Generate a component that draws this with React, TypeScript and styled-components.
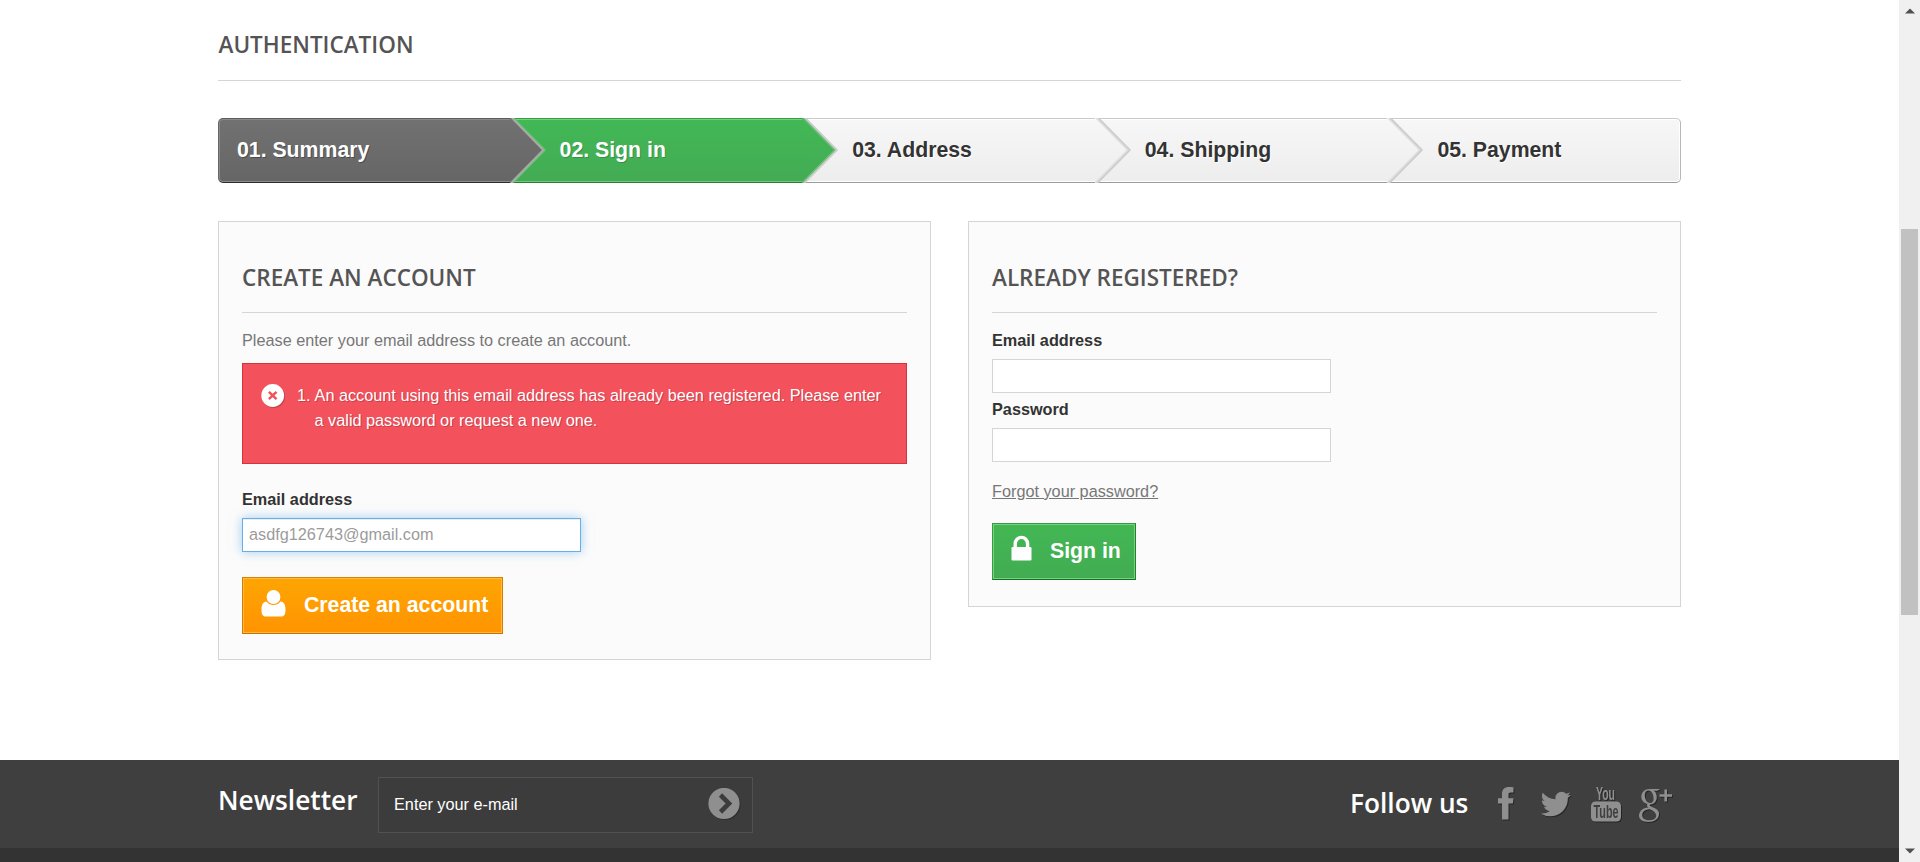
import React from "react";
import styled, { createGlobalStyle, css } from "styled-components";

const GlobalStyle = createGlobalStyle`
  *, *::before, *::after { box-sizing: border-box; }
  html, body { margin: 0; padding: 0; height: 862px; overflow: hidden; background: #fff; }
  body { font: 16.25px/22.5px "Liberation Sans", Arial, sans-serif; color: #777; }
  h1, h3, h4, p, ol { margin: 0; padding: 0; font-weight: inherit; }
  button, input { font: inherit; }
`;

const Viewport = styled.div`
  display: flex;
  height: 862px;
  overflow: hidden;
`;

const Page = styled.div`
  flex: 1;
  display: flex;
  flex-direction: column;
`;

const Main = styled.main`
  width: 1463px;
  height: 760px;
  flex: none;
  margin-left: 218px;
`;

const headingText = css`
  font: 600 22.5px/28px "Open Sans", sans-serif;
  color: #555454;
  text-transform: uppercase;
  border-bottom: 1px solid #d6d4d4;
  white-space: nowrap;
`;

const PageHeading = styled.h1`
  ${headingText}
  height: 81px;
  padding-top: 31px;
  text-indent: 0.5px;
  margin-bottom: 37px;
`;

const Steps = styled.ol`
  display: flex;
  height: 65px;
  margin-bottom: 38px;
  list-style: none;
`;

type StepKind = "done" | "current" | "todo";

const stepLook = {
  done: css`
    background: linear-gradient(#727171, #666);
    border-color: #5e5d5d #666 #2e2d2d;
    color: #fff;
    text-shadow: 1px 1px rgba(0, 0, 0, 0.3);
    box-shadow: inset 0 0 0 1px #8b8a8a;
  `,
  current: css`
    background: linear-gradient(#42b856, #43ab54);
    border-color: #399b49 #399b49 #247f32;
    color: #fff;
    text-shadow: 1px 1px rgba(0, 0, 0, 0.2);
    box-shadow: inset 0 1px #74d578, inset 0 -1px #74c77d;
  `,
  todo: css`
    background: linear-gradient(#f7f7f7, #ededed);
    border-color: #cacaca #b7b7b7 #9a9a9a;
    color: #333;
    text-shadow: 1px 1px #fff;
    box-shadow: inset 0 1px #fff, inset 0 -1px #fff;
  `,
};

const Step = styled.li<{ $kind: StepKind; $first?: boolean; $last?: boolean }>`
  position: relative;
  flex: none;
  width: 20%;
  height: 65px;
  padding-left: ${(p) => (p.$first ? 18 : 49)}px;
  border-style: solid;
  border-width: 1px 0;
  font-size: 21.25px;
  line-height: 63px;
  font-weight: bold;
  white-space: nowrap;
  ${(p) => stepLook[p.$kind]}
  ${(p) => p.$first && "border-left-width: 1px; border-radius: 5px 0 0 5px;"}
  ${(p) => p.$last && "border-right-width: 1px; border-radius: 0 5px 5px 0; box-shadow: inset 0 0 0 1px #fff;"}
`;

const ArrowSvg = styled.svg`
  position: absolute;
  z-index: 2;
  left: 100%;
  top: -1px;
  margin-left: -1px;
`;

const arrowFill: Record<StepKind, [string, string, string, string]> = {
  done: ["#727171", "#666", "#7d7b7c", "#6bc276"],
  current: ["#42b856", "#43ab54", "#62be6e", "#cbcbcb"],
  todo: ["#f7f7f7", "#ededed", "#e2e2e2", "#cdcdcd"],
};

const Arrow = ({ kind, id }: { kind: StepKind; id: string }) => {
  const [top, bottom, inner, outer] = arrowFill[kind];
  return (
    <ArrowSvg width="38" height="65" viewBox="0 0 38 65">
      <defs>
        <linearGradient id={id} x1="0" y1="0" x2="0" y2="1">
          <stop offset="0" stopColor={top} />
          <stop offset="1" stopColor={bottom} />
        </linearGradient>
      </defs>
      <path d="M0 0H2.5L34 32 2 65H0Z" fill={`url(#${id})`} />
      <path d="M2.5 0L34 32 1.5 65" fill="none" stroke={outer} strokeWidth="3" />
      <path d="M1 0L32.5 32 0 65" fill="none" stroke={inner} strokeWidth="1.4" />
      {kind === "done" && <path d="M2 0L33.2 32 1 65" fill="none" stroke="#b0abae" strokeWidth="1.6" />}
    </ArrowSvg>
  );
};

const Columns = styled.div`
  display: flex;
  align-items: flex-start;
  gap: 37px;
`;

const Panel = styled.section<{ $height: number }>`
  width: 713px;
  height: ${(p) => p.$height}px;
  padding: 0 23px;
  background: #fbfbfb;
  border: 1px solid #d6d4d4;
`;

const PanelHeading = styled.h3`
  ${headingText}
  height: 91px;
  padding-top: 42px;
  margin-bottom: 16px;
`;

const Alert = styled.div`
  display: flex;
  height: 101px;
  margin: 11.5px 0 24px;
  padding: 20px 18px;
  background: #f3515c;
  border: 1px solid #d4323d;
  color: #fff;
  line-height: 25px;
  text-shadow: 1px 1px rgba(0, 0, 0, 0.2);
`;

const AlertIcon = styled.svg`
  flex: none;
  margin-right: 12px;
  filter: drop-shadow(1px 1px 0 rgba(0, 0, 0, 0.2));
`;

const AlertList = styled.div`
  display: flex;
  gap: 4px;
  margin-top: -1px;
  white-space: nowrap;
`;

const Label = styled.label`
  display: block;
  height: 23px;
  margin-bottom: 7px;
  color: #333;
  font-weight: bold;
`;

const Input = styled.input<{ $active?: boolean; $gap: number }>`
  display: block;
  width: 339px;
  height: 34px;
  margin: 0 0 ${(p) => p.$gap}px;
  padding: 0 6px 2px;
  border: 1px solid #d6d4d4;
  border-radius: 0;
  outline: none;
  background: #fff;
  color: #9c9b9b;
  ${(p) =>
    p.$active &&
    "border-color: #66afe9; box-shadow: inset 0 1px 1px rgba(0,0,0,.075), 0 0 10px rgba(102,175,233,.6);"}
`;

const ForgotLink = styled.a`
  display: table;
  color: #777;
  text-decoration: underline;
  margin-bottom: 20.5px;
`;

const Button = styled.button<{ $tone: "orange" | "green"; $width: number }>`
  display: flex;
  width: ${(p) => p.$width}px;
  height: 57px;
  padding: 0 0 0 18px;
  border: 1px solid;
  border-radius: 0;
  color: #fff;
  font-size: 21.25px;
  line-height: 54px;
  font-weight: bold;
  white-space: nowrap;
  ${(p) =>
    p.$tone === "orange"
      ? css`
          background: linear-gradient(#fea502, #ff9402);
          border-color: #d68100 #d67c00 #c87000;
          box-shadow: inset 0 0 0 1px #ffb840;
        `
      : css`
          background: linear-gradient(#43b754, #42ac52);
          border-color: #399a49 #247f32 #1a6d27 #399a49;
          box-shadow: inset 0 0 0 1px #74d578;
        `}
`;

const ButtonIcon = styled.svg<{ $gap: number }>`
  flex: none;
  margin: 11px ${(p) => p.$gap}px 0 0;
`;

const FooterBar = styled.footer`
  display: flex;
  justify-content: space-between;
  height: 88px;
  flex: none;
  padding: 0 218px;
  background: #3f3f3f;
`;

const FooterStrip = styled.div`
  height: 14px;
  background: #333;
`;

const FooterTitle = styled.h4`
  font: 600 26.25px/32px "Open Sans", sans-serif;
  color: #fff;
  white-space: nowrap;
`;

const Newsletter = styled.div`
  display: flex;
  ${FooterTitle} {
    width: 160px;
    padding-top: 24px;
  }
`;

const NewsletterField = styled.div`
  display: flex;
  justify-content: space-between;
  width: 375px;
  height: 56px;
  margin-top: 17px;
  padding: 10px 11px 0 15px;
  border: 1px solid #515151;
  background: #3c3c3c;
  color: #fff;
  line-height: 33px;
`;

const Social = styled.div`
  display: flex;
  ${FooterTitle} {
    width: 148px;
    padding-top: 27px;
  }
`;

const SocialIcon = styled.svg<{ $gap?: number }>`
  margin: 26px ${(p) => p.$gap ?? 0}px 0 0;
  fill: #908f8f;
  overflow: visible;
  filter: drop-shadow(1px 1px 0 rgba(0, 0, 0, 0.4));
`;

const NarrowText = styled.text`
  font-family: "Liberation Sans Narrow", "Liberation Sans", sans-serif;
  font-weight: bold;
`;

const Scrollbar = styled.div`
  display: flex;
  flex-direction: column;
  align-items: center;
  width: 21px;
  height: 862px;
  background: #f0f0f0;
`;

const Thumb = styled.div`
  width: 17px;
  height: 386px;
  margin: 215px 0 233px;
  background: #c1c1c1;
`;

const ScrollArrow = styled.svg`
  flex: none;
  margin-top: 8px;
  & ~ & { margin-top: 0; }
`;

const steps: { label: string; kind: StepKind }[] = [
  { label: "01. Summary", kind: "done" },
  { label: "02. Sign in", kind: "current" },
  { label: "03. Address", kind: "todo" },
  { label: "04. Shipping", kind: "todo" },
  { label: "05. Payment", kind: "todo" },
];

export default function App() {
  return (
    <>
      <GlobalStyle />
      <Viewport>
        <Page>
          <Main>
            <PageHeading>Authentication</PageHeading>
            <Steps>
              {steps.map((s, i) => (
                <Step key={s.label} $kind={s.kind} $first={i === 0} $last={i === 4}>
                  {s.label}
                  {i < 4 && <Arrow kind={s.kind} id={`step-arrow-${i}`} />}
                </Step>
              ))}
            </Steps>
            <Columns>
              <Panel $height={439}>
                <PanelHeading>Create an account</PanelHeading>
                <p>Please enter your email address to create an account.</p>
                <Alert>
                  <AlertIcon width="24" height="24" viewBox="0 0 24 24">
                    <circle cx="11.700" cy="11.500" r="11.400" fill="#fff" />
                    <path d="M7.900 7.800L15.500 15.200M15.500 7.800L7.900 15.200" stroke="#f3515c" strokeWidth="2.500" />
                  </AlertIcon>
                  <AlertList>
                    <span>1.</span>
                    <span>
                      An account using this email address has already been registered. Please enter
                      <br />a valid password or request a new one.
                    </span>
                  </AlertList>
                </Alert>
                <Label>Email address</Label>
                <Input $active $gap={25} readOnly value="asdfg126743@gmail.com" />
                <Button $tone="orange" $width={261}>
                  <ButtonIcon $gap={18} width="25" height="30" viewBox="0 0 25 30">
                    <path
                      d="M5.4 12.6C2 12.8.5 16 .5 20.5C.5 25 1.5 27.5 5 27.5H20C23.5 27.5 24.5 25 24.5 20.5C24.5 16 23 12.8 19.6 12.6C17.600 15.200 15.200 15.900 12.500 15.900S7.400 15.200 5.400 12.600Z"
                      fill="#fff"
                    />
                    <circle cx="12.500" cy="8" r="6.900" fill="#fff" />
                  </ButtonIcon>
                  Create an account
                </Button>
              </Panel>
              <Panel $height={386}>
                <PanelHeading>Already registered?</PanelHeading>
                <Label>Email address</Label>
                <Input $gap={5} readOnly />
                <Label>Password</Label>
                <Input $gap={18} readOnly />
                <ForgotLink>Forgot your password?</ForgotLink>
                <Button $tone="green" $width={144}>
                  <ButtonIcon $gap={18} width="21" height="30" viewBox="0 0 21 30">
                    <path d="M4.200 12V8.800a6.200 6.400 0 0 1 12.400 0V12" fill="none" stroke="#fff" strokeWidth="3.400" />
                    <rect x=".5" y="12" width="20" height="13.500" rx="1.200" fill="#fff" />
                  </ButtonIcon>
                  Sign in
                </Button>
              </Panel>
            </Columns>
          </Main>
          <FooterBar>
            <Newsletter>
              <FooterTitle>Newsletter</FooterTitle>
              <NewsletterField>
                Enter your e-mail
                <svg width="33" height="33" viewBox="0 0 33 33">
                  <circle cx="17" cy="16.500" r="15.600" fill="#2e2e2e" />
                  <circle cx="16" cy="15.500" r="15.600" fill="#908f8f" />
                  <path d="M12.500 7L21 15.500L12.500 24" fill="none" stroke="#3c3c3c" strokeWidth="4.600" />
                </svg>
              </NewsletterField>
            </Newsletter>
            <Social>
              <FooterTitle>Follow us</FooterTitle>
              <SocialIcon $gap={27} width="16" height="36" viewBox="0 0 16 36">
                <path d="M15.500 1.200V6.400H12.700C11 6.400 10.500 7.200 10.500 8.700V12.200H15.500L14.900 17.600H10.500V33.500H4V17.600H0V12.200H4V8C4 3.500 6.500 1 11 1C13 1 14.600 1.100 15.500 1.200Z" />
              </SocialIcon>
              <SocialIcon $gap={20} width="30" height="36" viewBox="0 0 30 36">
                <path
                  transform="translate(-2.4 .8) scale(.0192)"
                  d="M1684 408q-67 98-162 167 1 14 1 42 0 130-38 259.500t-115.500 248.500-184.500 210.500-258 146-323 54.500q-271 0-496-145 35 4 78 4 225 0 401-138-105-2-188-64.500t-114-159.500q33 5 61 5 43 0 85-11-112-23-185.500-111.500t-73.500-205.500v-4q68 38 146 41-66-44-105-115t-39-154q0-88 44-163 121 149 294.500 238.500t371.500 99.500q-8-38-8-74 0-134 94.500-228.500t228.500-94.500q140 0 236 102 109-21 205-78-37 115-142 178 93-10 186-50z"
                />
              </SocialIcon>
              <SocialIcon $gap={18} width="30" height="36" viewBox="0 0 30 36">
                <NarrowText x="5" y="13.800" textLength="19" lengthAdjust="spacingAndGlyphs" fontSize="17.500">You</NarrowText>
                <rect x="0" y="15.500" width="30" height="20" rx="4.500" />
                <NarrowText x="2.500" y="32" textLength="25" lengthAdjust="spacingAndGlyphs" fontSize="18" fill="#3f3f3f">Tube</NarrowText>
              </SocialIcon>
              <SocialIcon $gap={9} width="33" height="36" viewBox="0 0 33 36">
                <path
                  fillRule="evenodd"
                  d="M10.500 3C14.800 3 17.800 6.800 17.800 11C17.800 15.500 15 18.400 11 18.400C6 18.400 2.300 15.200 2.300 10.800C2.300 6.200 5.800 3 10.500 3ZM9.600 4.500C7.200 4.500 5.800 6.500 5.800 9.200C5.800 13.200 8.200 17 11.200 17C13.500 17 14.600 15.300 14.600 12.800C14.600 8.500 12.600 4.500 9.600 4.500Z"
                />
                <path d="M10 3H21L18.500 4.700H14.500Z" />
                <path
                  fillRule="evenodd"
                  d="M10 21.500C15.800 21.500 20 23.400 20 28C20 32.800 15.500 36 9.300 36C3.800 36 0 33.600 0 29.600C0 25 4.500 21.500 10 21.500ZM11.200 23.200C6.300 23.200 3.200 25.500 3.200 28.900C3.200 32.200 6.200 34.200 10.400 34.200C14.600 34.200 17.200 32.500 17.200 29.500C17.200 26.800 15 25 11.200 23.200Z"
                />
                <path d="M10.500 17.500Q7.500 19.800 12 22Q18 24.800 18.600 28.500" fill="none" stroke="#908f8f" strokeWidth="2.600" />
                <path d="M26.700 3.500V15.500M20.500 9.500H33" stroke="#908f8f" strokeWidth="2.600" />
              </SocialIcon>
            </Social>
          </FooterBar>
          <FooterStrip />
        </Page>
        <Scrollbar>
          <ScrollArrow width="10" height="6" viewBox="0 0 10 6">
            <path d="M0 5.500L5 .5L10 5.500Z" fill="#505050" />
          </ScrollArrow>
          <Thumb />
          <ScrollArrow width="10" height="6" viewBox="0 0 10 6">
            <path d="M0 .5L5 5.500L10 .5Z" fill="#505050" />
          </ScrollArrow>
        </Scrollbar>
      </Viewport>
    </>
  );
}
